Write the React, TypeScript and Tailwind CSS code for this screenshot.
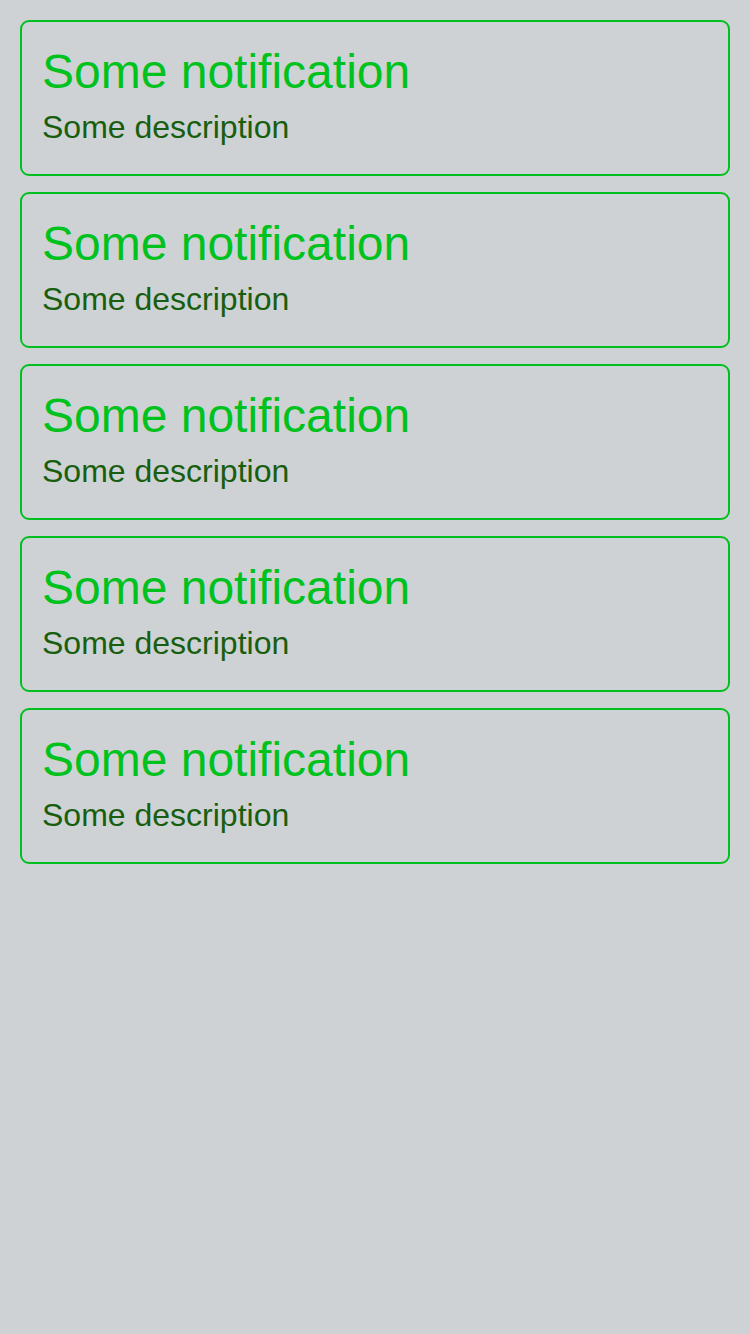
const notifications = Array.from({ length: 5 }, (_, i) => ({
  id: i,
  title: 'Some notification',
  description: 'Some description',
}));

function NotificationCard({ title, description }: { title: string; description: string }) {
  return (
    <div className="h-[156px] rounded-[9px] border-2 border-[#00c020] px-5 pt-[22px]">
      <div className="text-[48px] leading-[55px] text-[#00c21e]">{title}</div>
      <div className="mt-[10px] text-[32px] leading-[37px] text-[#185e0e]">{description}</div>
    </div>
  );
}

export default function App() {
  return (
    <div
      className="min-h-[1334px] w-[750px] bg-[#ced2d5] p-5"
      style={{ fontFamily: '"Liberation Sans", Arial, sans-serif' }}
    >
      <div className="flex flex-col gap-4">
        {notifications.map((n) => (
          <NotificationCard key={n.id} title={n.title} description={n.description} />
        ))}
      </div>
    </div>
  );
}
